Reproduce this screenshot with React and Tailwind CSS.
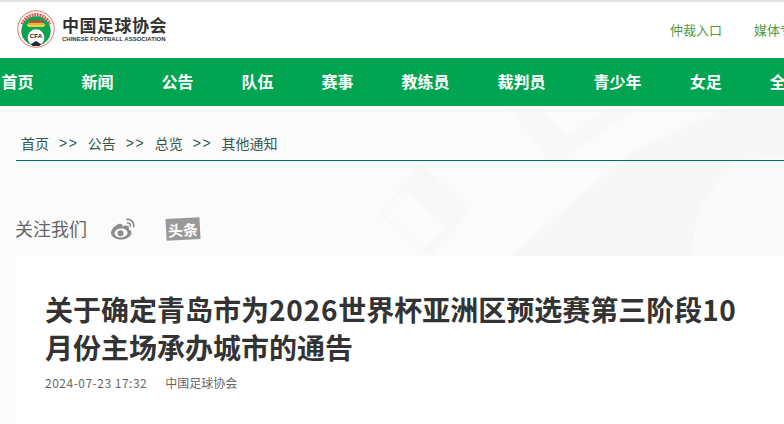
import React from 'react';

const navItems = ['首页', '新闻', '公告', '队伍', '赛事', '教练员', '裁判员', '青少年', '女足', '全部'];
const crumbs = ['首页', '公告', '总览', '其他通知'];

const Logo = () => (
    <svg width="38" height="38" viewBox="0 0 40 40">
        <circle cx="20" cy="20" r="19.200" fill="#fff" stroke="#e0655c" strokeWidth="1" />
        <path d="M5.500 15 A15.500 15.500 0 0 1 34.500 15" fill="none" stroke="#dc5a50" strokeWidth="3.500" strokeDasharray="2 0.800" />
        <circle cx="20" cy="22" r="15.500" fill="#12a150" />
        <path d="M10 15 H30 L28 18 H12 Z" fill="#f0d04c" />
        <rect x="13" y="11" width="14" height="2.500" fill="#d23b34" />
        <rect x="12" y="13.500" width="16" height="1.500" fill="#e6b93c" />
        <circle cx="20" cy="29" r="8.800" fill="#fff" />
        <path d="M14.500 36 L20 32.500 L25.500 36 L23.500 37.800 L16.500 37.800 Z" fill="#1f2937" />
        <text x="20" y="29.500" textAnchor="middle" fontSize="6.500" fontWeight="700" fill="#222" fontFamily="Liberation Sans, sans-serif">CFA</text>
    </svg>
);

const WeiboIcon = () => (
    <svg width="26" height="24" viewBox="0 0 26 24" fill="#8c8c8c">
        <path fillRule="evenodd" d="M10.500 6.500C5.500 7.500 1 12 1 16c0 3.800 4.800 6.500 9.800 6.500 6.500 0 10.700-3.800 10.700-6.800 0-2-1.800-2.900-2.900-3.200 .5-1.400.5-2.700-.3-3.400-1.300-1.200-4-.3-5.700.4-.1-1.900-.5-3-2.100-2.500zM10.500 11.500c3.800-.3 7 1.500 7 4 .1 2.700-2.700 4.800-6.200 5-3.500.2-6.500-1.500-6.700-4-.1-2.400 2.400-4.700 5.900-5z" />
        <circle cx="10.500" cy="16.200" r="3" />
        <path d="M17 2.500c3.800-.5 7.200 2.300 6.800 7" fill="none" stroke="#8c8c8c" strokeWidth="1.800" strokeLinecap="round" />
        <path d="M17.500 6c1.900-.2 3.200 1 2.900 3.200" fill="none" stroke="#8c8c8c" strokeWidth="1.600" strokeLinecap="round" />
    </svg>
);

// faint shapes in the page background
const BackgroundShapes = () => (
    <svg className="absolute inset-0 w-full h-full" viewBox="0 0 784 318" preserveAspectRatio="none">
        <path d="M510 150 L630 47 L730 0 L784 0 L784 150 Z" fill="#f7f7f7" />
        <path d="M507 0 L553 60 L640 0 L610 0 L568 30 L540 0 Z" fill="#f8f8f8" />
        <path d="M420 57 L470 104 L430 150 L380 109 Z" fill="#f8f8f8" />
        <path d="M405 84 L447 121 L423 144 L383 106 Z" fill="#fbfbfb" />
        <path d="M690 150 L700 100 L735 55 L784 50 L784 150 Z" fill="#fafafa" />
    </svg>
);

export default function App() {
    return (
        <div className="w-[784px] h-[424px] overflow-hidden bg-white" style={{ fontFamily: '"Noto Sans CJK SC", sans-serif' }}>
            <header className="h-[58px] border-t-2 border-[#e5e5e5] flex items-center justify-between pl-[17px]">
                <div className="flex items-center gap-[7px] -mt-[2px]">
                    <Logo />
                    <div className="flex flex-col">
                        <span className="text-[17px] leading-[20px] font-bold tracking-[0.5px] text-[#333]">中国足球协会</span>
                        <span className="text-[6px] leading-[8px] font-bold text-[#333] whitespace-nowrap" style={{ fontFamily: '"Liberation Sans", sans-serif' }}>CHINESE FOOTBALL ASSOCIATION</span>
                    </div>
                </div>
                <div className="flex gap-[32px] text-[13px] text-[#4f9a3c] whitespace-nowrap w-[114px] overflow-hidden shrink-0">
                    <span>仲裁入口</span>
                    <span>媒体专区</span>
                </div>
            </header>

            <nav className="h-[48px] bg-[#00a451] flex items-center gap-[48px] pl-[1.5px] pb-[2px] whitespace-nowrap text-white text-[16px] font-bold">
                {navItems.map(item => (
                    <span key={item}>{item}</span>
                ))}
            </nav>

            <main className="relative h-[318px] bg-[#fbfbfb] pl-[16px]">
                <BackgroundShapes />
                <div className="relative">
                    <div className="h-[55px] pt-[26px] border-b-[1px] border-[#00745a] flex items-start pl-[5px] text-[14px] leading-[22px] text-[#33584f]">
                        {crumbs.map((c, i) => (
                            <span key={c} className="flex">
                                <span>{c}</span>
                                {i < crumbs.length - 1 && <span className="ml-[10px] mr-[9.5px] tracking-[1.5px]" style={{ fontFamily: '"Liberation Sans", sans-serif' }}>&gt;&gt;</span>}
                            </span>
                        ))}
                    </div>
                    <div className="h-[95px] -ml-[1px] pt-[40px] flex items-center gap-[23px] text-[18px] text-[#666]">
                        <span>关注我们</span>
                        <WeiboIcon />
                        <span className="ml-[7px] w-[34px] h-[22px] bg-[#999] -rotate-3 text-white text-[15px] font-bold flex items-center justify-center leading-none">头条</span>
                    </div>
                    <article className="h-[168px] bg-white pl-[29px] pt-[34px]">
                        <h1 className="w-[710px] text-[28px] leading-[38px] font-bold text-[#333]">
                            关于确定青岛市为<span className="tracking-[0.8px]">2026</span>世界杯亚洲区预选赛第三阶段<span className="tracking-[0.5px]">10</span>月份主场承办城市的通告
                        </h1>
                        <div className="mt-[8px] flex gap-[18px] text-[12px] leading-[18px] text-[#666]">
                            <span className="tracking-[0.5px]">2024-07-23 17:32</span>
                            <span>中国足球协会</span>
                        </div>
                    </article>
                </div>
            </main>
        </div>
    );
}
